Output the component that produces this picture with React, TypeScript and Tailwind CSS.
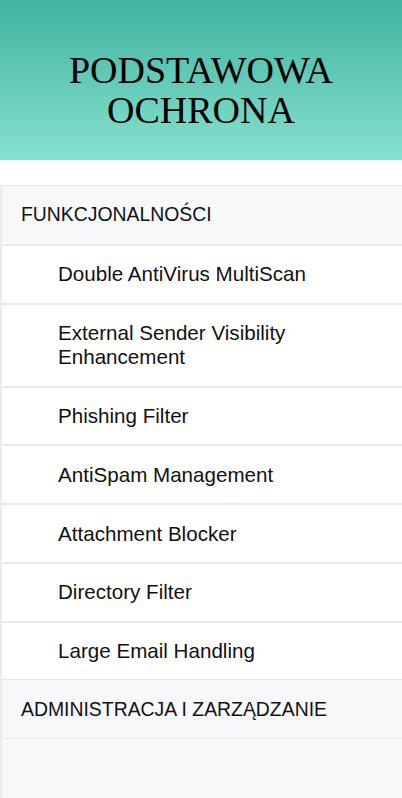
const features = [
  "Double AntiVirus MultiScan",
  "External Sender Visibility Enhancement",
  "Phishing Filter",
  "AntiSpam Management",
  "Attachment Blocker",
  "Directory Filter",
  "Large Email Handling",
];

export default function App() {
  return (
    <div className="w-[402px] h-[798px] overflow-hidden bg-white font-['Liberation_Sans',Arial,sans-serif] text-[#111]">
      {/* Header */}
      <div className="h-[160px] flex items-center justify-center bg-gradient-to-b from-[#3fb49f] to-[#84e1cf]">
        <h1 className="text-center font-['Liberation_Serif','Times_New_Roman',serif] text-[38px] leading-[40px] text-black pt-[20px]">
          PODSTAWOWA
          <br />
          OCHRONA
        </h1>
      </div>

      <div className="h-[25px]" />

      <div className="border-l-2 border-[#ececec]">
        <div className="h-[59px] flex items-center pl-[19px] bg-[#f7f8fa] border-t border-[#e8e8e8] text-[19.4px]">
          FUNKCJONALNOŚCI
        </div>
        {features.map((f) => (
          <div
            key={f}
            className="pl-[56px] pr-6 py-[16.4px] border-t-2 border-[#e9e9e9] text-[20.6px] leading-[24px] bg-white"
          >
            {f}
          </div>
        ))}
        <div className="h-[59px] flex items-center pl-[19px] bg-[#f7f8fa] border-t border-[#e8e8e8] text-[19.4px]">
          ADMINISTRACJA I ZARZĄDZANIE
        </div>
        <div className="h-[60px] bg-[#f7f8fa] border-t border-[#e8e8e8]" />
      </div>
    </div>
  );
}
